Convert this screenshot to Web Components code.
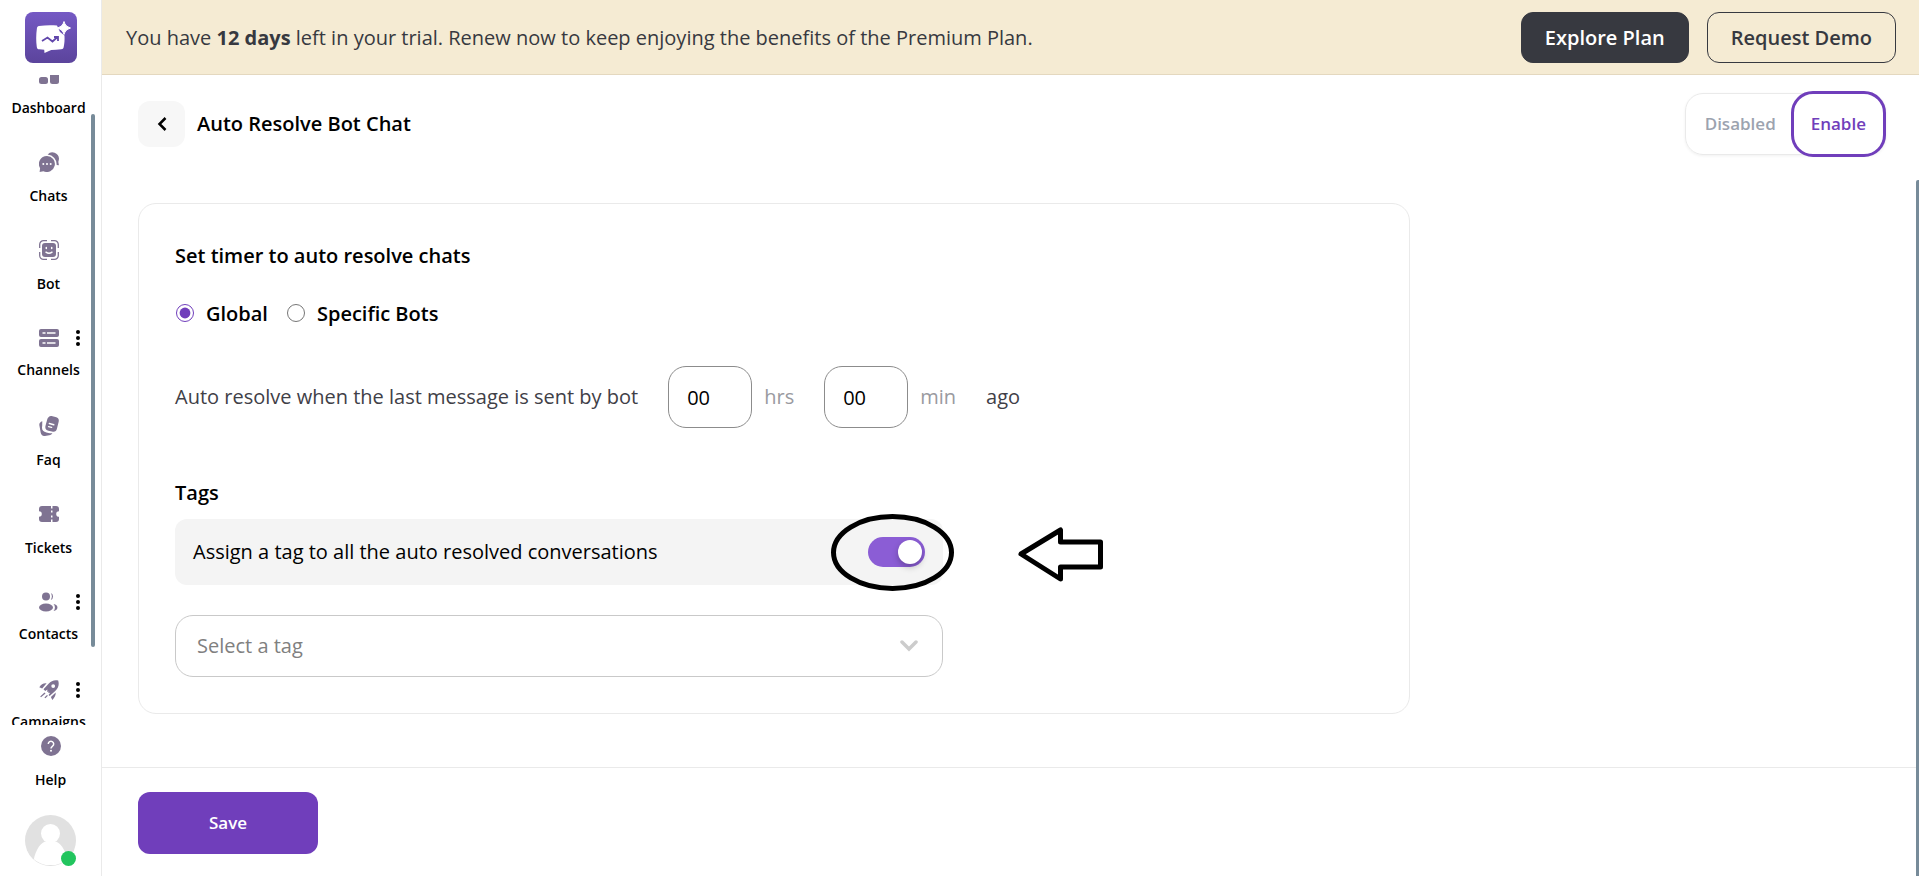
<!DOCTYPE html>
<html lang="en">
<head>
<meta charset="utf-8">
<title>Auto Resolve Bot Chat</title>
<style>
  html, body {
    height: 100%;
  }
  body {
    margin: 0;
    background: #fff;
    color: #000;
    font-family: "Open Sans", "Noto Sans", sans-serif;
    font-size: 20px;
    line-height: 28px;
    --purple: #703ebb;
    --line: #eaeaea;
    --dark: #373940;
    --icon: #7f7392;
    --scroll: #778b99;
  }
</style>
</head>
<body>
<app-shell>
  <side-bar slot="sidebar">
    <nav-item icon="dashboard">Dashboard</nav-item>
    <nav-item icon="chats">Chats</nav-item>
    <nav-item icon="bot">Bot</nav-item>
    <nav-item icon="channels" menu>Channels</nav-item>
    <nav-item icon="faq">Faq</nav-item>
    <nav-item icon="tickets">Tickets</nav-item>
    <nav-item icon="contacts" menu>Contacts</nav-item>
    <nav-item icon="campaigns" menu>Campaigns</nav-item>
    <nav-item slot="footer" icon="help">Help</nav-item>
    <user-avatar slot="footer"></user-avatar>
  </side-bar>
  <trial-banner slot="banner" days="12"></trial-banner>
  <page-header slot="header">
    Auto Resolve Bot Chat
    <status-switch slot="actions"></status-switch>
  </page-header>
  <settings-card>
    <bot-scope></bot-scope>
    <resolve-timer></resolve-timer>
    <tag-settings></tag-settings>
  </settings-card>
  <save-bar slot="footer"></save-bar>
</app-shell>

<script>
const define = (name, html, setup) => {
  const template = document.createElement("template");
  template.innerHTML = html;
  window.customElements.define(name, class extends HTMLElement {
    constructor() {
      super();
      const shadowRoot = this.attachShadow({ mode: "open" });
      shadowRoot.appendChild(template.content.cloneNode(true));
    }
    connectedCallback() {
      if (setup) {
        setup(this, this.shadowRoot);
      }
    }
  });
};

const icons = {
  dashboard: `<rect x="0" y="0" width="9" height="11" rx="2.5"/><rect x="11" y="0" width="9" height="7" rx="2.5"/><rect x="0" y="13" width="9" height="7" rx="2.5"/><path d="M11 9h9v8.500a2.500 2.500 0 0 1-2.500 2.500h-4a2.500 2.500 0 0 1-2.500-2.500z"/>`,
  chats: `<path d="M8 4a8 8 0 1 1-3.600 15.200L.6 20l.5-3.800A8 8 0 0 1 8 4z"/><path d="M8.600 2.500A6.600 6.600 0 0 1 20 6.500c0 1.800-.7 2.600-.6 3.800l.5 3-2.300-.2A9.800 9.800 0 0 0 8.600 2.500z"/><g fill="#fff"><circle cx="4.300" cy="12" r="1"/><circle cx="8" cy="12" r="1"/><circle cx="11.700" cy="12" r="1"/></g>`,
  bot: `<rect x="3" y="3" width="14" height="14" rx="3"/><g fill="none" stroke="#7f7392" stroke-width="1.300"><path d="M.7 8V4.500A3.800 3.800 0 0 1 4.500.7H8M12 .7h3.500a3.800 3.800 0 0 1 3.800 3.800V8M19.300 12v3.500a3.800 3.800 0 0 1-3.800 3.800H12M8 19.300H4.500a3.800 3.800 0 0 1-3.800-3.800V12"/></g><g fill="none" stroke="#fff" stroke-width="1.500" stroke-linecap="round"><path d="M7.300 7.500v1M12.700 7.500v1M7 12.200q3 2.200 6 0"/></g>`,
  channels: `<rect x="0" y="1" width="20" height="8" rx="2"/><rect x="0" y="11" width="20" height="8" rx="2"/><g stroke="#fff" stroke-width="1.400"><path d="M3.500 5h3M8 5h8.500M3.500 15h3M8 15h8.500"/></g>`,
  faq: `<path d="M3.300 5.200C.9 6 0 7.500.4 9.600l1.300 7.200c.5 2.400 2 3.500 4.300 3.100l4.200-.7c1.600-.3 2.600-.9 3.200-2-1.200.2-2.500.1-4-.3l-2-.5c-3.500-.9-5-2.900-4.200-6.300z"/><path d="M9.800.9c.7-.9 2-1.100 3.700-.7l3 .8c2.800.7 3.800 2.200 3.100 5l-1.600 6.500c-.7 2.800-2.300 3.800-5 3.100l-3.500-.9c-2.700-.7-3.600-2.200-3-5L8.200 3.500c.3-1.200.8-2.100 1.600-2.600z"/><g stroke="#fff" stroke-width="1.400" stroke-linecap="round"><path d="M10.300 7.500l4.500 1.200M9.600 10.600l3 .8"/></g>`,
  tickets: `<path fill-rule="evenodd" d="M3 2h9v2.500h1.500V2H17a3 3 0 0 1 3 3v2.200a2.800 2.800 0 0 0 0 5.600V15a3 3 0 0 1-3 3h-3.500v-2.500H12V18H3a3 3 0 0 1-3-3v-2.200a2.800 2.800 0 0 0 0-5.600V5a3 3 0 0 1 3-3zm9 4.500v2h1.500v-2zm0 5v2h1.500v-2z"/>`,
  contacts: `<circle cx="7" cy="4.500" r="4"/><ellipse cx="7" cy="15.500" rx="7" ry="4"/><path d="M11.800 1.100a3.700 3.700 0 0 1 0 6.800 6.300 6.300 0 0 0 0-6.800zM14.500 12c5.300.4 5.300 6.600 0 7a5 5 0 0 0 0-7z"/>`,
  campaigns: `<path fill-rule="evenodd" d="M19.200.5C15.500-.4 12.200.8 9.600 3.700L4.500 9.300l1.700 1.800 2.200-1.500-.2 2.300 1.400-.3-.3 1.500 1.900-.3-1.600 2.200 1 1 5.400-4.800c3.300-2.900 4.500-6.500 3.200-10.700zM14.200 8a1.900 1.900 0 1 1 0-3.800 1.900 1.900 0 0 1 0 3.800z"/><path d="M7.600 3.300C4.500 3 2 4.300.3 7.200l2.900 1.200zM16.700 12.500c.1 3-1.200 5.500-3.400 7.400l-1.400-3zM5.500 12.500l1 1-4.500 3.800-.8-.8zM8 14.900l.9.9-2.500 2.500-1-.9z"/>`,
  help: `<circle cx="10" cy="10" r="10"/><path d="M7.300 8a2.700 2.700 0 1 1 4.200 2.200c-1 .7-1.500 1-1.500 2.200" fill="none" stroke="#fff" stroke-width="1.500"/><circle cx="10" cy="14.800" r="1" fill="#fff"/>`
};

define("app-shell", `
<style>
:host {
  display: flex;
  height: 100vh;
}
.content {
  flex: 1;
  min-width: 0;
  display: flex;
  flex-direction: column;
}
.page {
  position: relative;
  flex: 1;
  min-height: 0;
  display: flex;
  flex-direction: column;
}
/* thumb of the page scroller, over the content */
.page::after {
  content: "";
  position: absolute;
  top: 0;
  right: 0;
  bottom: 0;
  width: 3px;
  border-radius: 2px 0 0 0;
  background: var(--scroll);
}
main {
  flex: 1;
  min-height: 0;
  overflow: hidden;
  padding: 23px 36px;
}
</style>
<slot name="sidebar"></slot>
<div class="content">
  <slot name="banner"></slot>
  <slot name="header"></slot>
  <div class="page">
    <main><slot></slot></main>
    <slot name="footer"></slot>
  </div>
</div>
`);

define("nav-item", `
<style>
:host {
  flex: none;
  display: block;
}
a {
  display: grid;
  grid-template-columns: 1fr 20px 1fr;
  justify-items: center;
  align-items: center;
  row-gap: 14px;
  color: inherit;
  text-decoration: none;
}
svg {
  display: block;
}
.icon {
  grid-column: 2;
  width: 20px;
  height: 20px;
  fill: var(--icon);
}
.menu {
  display: none;
}
.label {
  grid-column: 1 / -1;
  font-size: 14px;
  line-height: 20px;
  font-weight: 600;
}
:host([menu]) a {
  row-gap: 12px;
  padding-bottom: 2px;
}
:host([menu]) .menu {
  display: block;
}
</style>
<a href="#">
  <svg class="icon" viewBox="0 0 20 20"></svg>
  <svg class="menu" width="4" height="18" viewBox="0 0 4 18"><circle cx="2" cy="3" r="2"/><circle cx="2" cy="9" r="2"/><circle cx="2" cy="15" r="2"/></svg>
  <span class="label"><slot></slot></span>
</a>
`, (host, root) => {
  root.querySelector(".icon").innerHTML = icons[host.getAttribute("icon")];
});

define("user-avatar", `
<style>
:host {
  display: block;
}
svg {
  display: block;
}
</style>
<svg width="51" height="51" viewBox="0 0 51 51">
  <clipPath id="c"><circle cx="25.500" cy="25.500" r="25"/></clipPath>
  <circle cx="25.500" cy="25.500" r="25.500" fill="#e1e1e1"/>
  <g clip-path="url(#c)" fill="#fff"><circle cx="25.500" cy="18.500" r="9.500"/><path d="M8 50C9 38 14 29 20 26.500h11C37 29 42 38 43 50z"/></g>
  <circle cx="43.500" cy="43.500" r="7.500" fill="#22c55e"/>
</svg>
`);

// after nav-item: the list has to have its full height before it can scroll
define("side-bar", `
<style>
:host {
  flex: none;
  display: flex;
  flex-direction: column;
  align-items: center;
  width: 101px;
  border-right: 1px solid var(--line);
}
.logo {
  display: block;
  width: 52px;
  height: 51px;
  margin: 12px 0;
}
.scroller {
  position: relative;
  flex: 1;
  min-height: 0;
  align-self: stretch;
}
nav {
  box-sizing: border-box;
  height: 100%;
  overflow-y: auto;
  scrollbar-width: none;
  display: flex;
  flex-direction: column;
  gap: 34px;
  padding: 34px 4px 34px 0;
}
.thumb {
  position: absolute;
  top: 6%;
  right: 6px;
  width: 4px;
  height: 82%;
  border-radius: 2px;
  background: var(--scroll);
}
footer {
  display: flex;
  flex-direction: column;
  align-items: center;
  gap: 25px;
  padding: 11px 0 10px;
}
</style>
<svg class="logo" viewBox="0 0 52 51">
  <defs><linearGradient id="g" x1="0" y1="0" x2="0" y2="1"><stop offset="0" stop-color="#7559c4"/><stop offset="1" stop-color="#5b449c"/></linearGradient></defs>
  <rect width="52" height="51" rx="8" fill="url(#g)"/>
  <path d="M14 14c6-1 12-1 18-.6l3 6.600 4.500 3.500c.2 4.500 0 8-.8 11.500-.3 1.500-1 2.200-2.500 2.300-3.500.4-7 .6-10 .8L19.500 41l-.3-3.200-5-.5c-1.500-.2-2.200-1-2.400-2.400-.8-6-.8-12 .1-18.500.2-1.500.8-2.200 2.100-2.400z" fill="#fff"/>
  <path d="M39 9.500c1 3.500 2.500 5 6.500 6.500-4 1.500-5.500 3-6.500 6.500-1-3.500-2.500-5-6.500-6.500 4-1.500 5.500-3 6.500-6.500z" fill="#fff" stroke="#fff" stroke-linejoin="round"/>
  <path d="M17 29l5.500-3.500 5 4 5-4.500M29 25h4v4" fill="none" stroke="#6147ab" stroke-width="1.800"/>
</svg>
<div class="scroller">
  <nav><slot></slot></nav>
  <div class="thumb"></div>
</div>
<footer><slot name="footer"></slot></footer>
`, (host, root) => {
  root.querySelector("nav").scrollTop = 45;
});

define("trial-banner", `
<style>
:host {
  display: flex;
  align-items: center;
  gap: 18px;
  padding: 12px 23px 11px 24px;
  background: #f5ebd3;
  border-bottom: 1px solid #e4d8bf;
  color: var(--dark);
}
p {
  flex: 1;
  margin: 0;
}
button {
  height: 51px;
  padding: 0 23px;
  border: 1px solid var(--dark);
  border-radius: 12px;
  background: none;
  color: inherit;
  font: inherit;
  font-weight: 600;
}
.primary {
  background: var(--dark);
  color: #fff;
}
</style>
<p>You have <b><span class="days"></span> days</b> left in your trial. Renew now to keep enjoying the benefits of the Premium Plan.</p>
<button class="primary" type="button">Explore Plan</button>
<button type="button">Request Demo</button>
`, (host, root) => {
  root.querySelector(".days").textContent = host.getAttribute("days");
});

define("page-header", `
<style>
:host {
  display: flex;
  align-items: center;
  gap: 12px;
  padding: 18px 33px 25px 36px;
}
button {
  display: grid;
  place-items: center;
  width: 47px;
  height: 46px;
  padding: 0;
  border: 0;
  border-radius: 12px;
  background: #f7f7f7;
}
h1 {
  flex: 1;
  margin: 0;
  font-size: inherit;
  font-weight: 600;
}
</style>
<button type="button" aria-label="Back"><svg width="10" height="14" viewBox="0 0 10 14" fill="none" stroke="#000" stroke-width="2.500"><path d="M8.500 1L2.500 7l6 6"/></svg></button>
<h1><slot></slot></h1>
<slot name="actions"></slot>
`);

define("status-switch", `
<style>
:host {
  display: flex;
  height: 60px;
  border: 1px solid var(--line);
  border-radius: 18px;
  box-shadow: 0 1px 3px rgba(0, 0, 0, .06);
}
button {
  padding: 0 17px 0 19px;
  border: 0;
  background: none;
  color: #9ca3af;
  font: inherit;
  font-size: 17px;
  font-weight: 600;
}
.on {
  margin: -3px -1px -3px -2px;
  padding: 0 17px;
  border: 3px solid var(--purple);
  border-radius: 22px;
  background: #fff;
  color: var(--purple);
}
</style>
<button type="button">Disabled</button>
<button class="on" type="button">Enable</button>
`);

define("settings-card", `
<style>
:host {
  box-sizing: border-box;
  display: block;
  width: calc(70% + 50px);
  padding: 38px 36px 36px;
  border: 1px solid var(--line);
  border-radius: 18px;
}
</style>
<slot></slot>
`);

define("bot-scope", `
<style>
:host {
  display: block;
}
h2 {
  margin: 0 0 30px;
  font-size: inherit;
  font-weight: 600;
}
.options {
  display: flex;
  gap: 18px;
}
label {
  display: flex;
  align-items: center;
  gap: 12px;
  font-weight: 600;
}
input {
  width: 18px;
  height: 18px;
  margin: 0 0 3px 1px;
  accent-color: var(--purple);
}
</style>
<h2>Set timer to auto resolve chats</h2>
<div class="options">
  <label><input type="radio" name="scope" checked>Global</label>
  <label><input type="radio" name="scope">Specific Bots</label>
</div>
`);

define("resolve-timer", `
<style>
:host {
  display: flex;
  align-items: center;
  gap: 30px;
  margin: 38px 0 51px;
  color: #3f4047;
}
label {
  display: flex;
  align-items: center;
  gap: 12px;
  color: #9a9aa0;
}
input {
  box-sizing: border-box;
  width: 84px;
  height: 62px;
  padding: 0 18px;
  border: 1px solid #8c8c8c;
  border-radius: 18px;
  color: #000;
  font: inherit;
}
</style>
<span>Auto resolve when the last message is sent by bot</span>
<label><input type="text" value="00"><span>hrs</span></label>
<label><input type="text" value="00"><span>min</span></label>
<span>ago</span>
`);

define("tag-settings", `
<style>
:host {
  display: block;
  max-width: 768px;
}
h2 {
  margin: 0 0 12px;
  font-size: inherit;
  font-weight: 600;
}
.assign {
  position: relative;
  display: flex;
  align-items: center;
  justify-content: space-between;
  height: 66px;
  padding: 0 18px;
  margin-bottom: 30px;
  border-radius: 12px;
  background: #f4f4f4;
}
.assign input {
  appearance: none;
  display: flex;
  width: 57px;
  height: 30px;
  margin: 0;
  padding: 3px;
  border-radius: 15px;
  background: #8b5dd5;
}
.assign input::before {
  content: "";
  width: 24px;
  height: 24px;
  border-radius: 50%;
  background: #fff;
  box-shadow: 0 3px 6px rgba(0, 0, 0, .25);
}
.assign input:checked {
  justify-content: flex-end;
}
.picker {
  display: grid;
  align-items: center;
}
.picker > * {
  grid-area: 1 / 1;
}
select {
  appearance: none;
  width: 100%;
  height: 62px;
  padding: 0 21px;
  border: 1px solid #c9c9c9;
  border-radius: 18px;
  background: #fff;
  color: #808080;
  font: inherit;
}
.picker svg {
  justify-self: end;
  margin-right: 25px;
  pointer-events: none;
}
</style>
<h2>Tags</h2>
<div class="assign">
  <label for="assign">Assign a tag to all the auto resolved conversations</label>
  <input id="assign" type="checkbox" role="switch" checked>
  <call-out></call-out>
</div>
<div class="picker">
  <select aria-label="Tag"><option>Select a tag</option></select>
  <svg width="18" height="12" viewBox="0 0 18 12" fill="none" stroke="#ccc" stroke-width="3.500" stroke-linecap="round"><path d="M2 2l7 7 7-7"/></svg>
</div>
`);

/* hand drawn ring round the switch and an arrow pointing at it */
define("call-out", `
<style>
:host {
  position: absolute;
  top: -5px;
  left: calc(100% - 112px);
  pointer-events: none;
}
svg {
  display: block;
}
</style>
<svg width="273" height="78" viewBox="0 0 273 78" fill="none" stroke="#000" stroke-width="5" stroke-linejoin="round">
  <ellipse cx="61.500" cy="38.500" rx="59" ry="36"/>
  <path d="M190 40L229.500 16v12H269.500v25H229.500v12z"/>
</svg>
`);

define("save-bar", `
<style>
:host {
  display: block;
  padding: 24px 36px 22px;
  border-top: 1px solid var(--line);
  background: #fff;
}
button {
  width: 180px;
  height: 62px;
  border: 0;
  border-radius: 12px;
  background: var(--purple);
  color: #fff;
  font: inherit;
  font-size: 17px;
  font-weight: 600;
}
</style>
<button type="button">Save</button>
`);
</script>
</body>
</html>
